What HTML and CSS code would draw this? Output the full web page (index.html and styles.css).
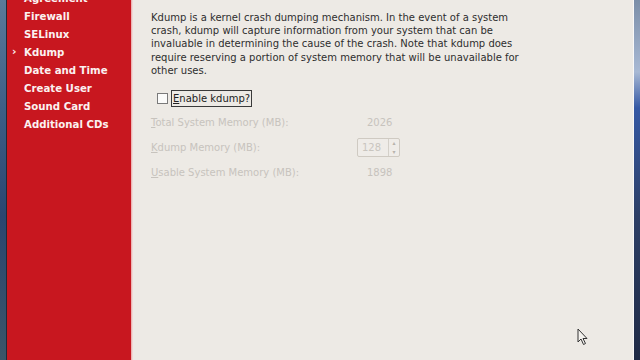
FILE: index.html
```html
<!DOCTYPE html>
<html>
<head>
<meta charset="utf-8">
<link rel="stylesheet" href="styles.css">
</head>
<body>
<div class="screen">
  <div class="edge-left"></div>
  <nav class="sidebar">
    <div class="item cut">Agreement</div>
    <div class="item">Firewall</div>
    <div class="item">SELinux</div>
    <div class="item current"><span class="arrow">›</span>Kdump</div>
    <div class="item">Date and Time</div>
    <div class="item">Create User</div>
    <div class="item">Sound Card</div>
    <div class="item">Additional CDs</div>
  </nav>
  <div class="divider"></div>
  <main class="content">
    <p class="intro">Kdump is a kernel crash dumping mechanism. In the event of a system crash, kdump will capture information from your system that can be invaluable in determining the cause of the crash. Note that kdump does require reserving a portion of system memory that will be unavailable for other uses.</p>
    <div class="check-row">
      <span class="checkbox"></span>
      <span class="check-label"><u>E</u>nable kdump?</span>
    </div>
    <div class="mem-row first">
      <span class="mem-label"><u>T</u>otal System Memory (MB):</span>
      <span class="mem-value">2026</span>
    </div>
    <div class="mem-row spin-row">
      <span class="mem-label"><u>K</u>dump Memory (MB):</span>
      <span class="spinner"><span class="spin-text">128</span><span class="spin-btns"><span class="up">▴</span><span class="down">▾</span></span></span>
    </div>
    <div class="mem-row">
      <span class="mem-label"><u>U</u>sable System Memory (MB):</span>
      <span class="mem-value">1898</span>
    </div>
    <svg class="cursor" width="12" height="18" viewBox="0 0 12 18">
      <path d="M1 1 L1 14 L4 11 L6.5 16.5 L8.5 15.5 L6 10.5 L10 10.5 Z" fill="#f4f2ee" stroke="#333" stroke-width="1"/>
    </svg>
  </main>
  <div class="edge-right"></div>
</div>
</body>
</html>
```
FILE: styles.css
```css
html, body {
  margin: 0;
  padding: 0;
  width: 640px;
  height: 360px;
  overflow: hidden;
}
.screen {
  display: grid;
  grid-template-columns: 7px 124px 2px 1fr 7px;
  width: 640px;
  height: 360px;
  position: relative;
}
.edge-left {
  background: linear-gradient(180deg, #5a7a9a 0%, #3d5f86 30%, #2a4670 60%, #3b5568 100%);
  border-right: 1px solid #1d2b3b;
}
.edge-right {
  background: linear-gradient(180deg, #7b8ea8 0%, #a8b9d4 20%, #3559a5 30%, #2d3f66 60%, #1f2a45 100%);
  border-left: 1px solid #f8f8f8;
}
.sidebar {
  background: #c8171f;
  display: flex;
  flex-direction: column;
  padding-top: 0;
}
.item {
  font-family: "DejaVu Sans", sans-serif;
  font-weight: bold;
  font-size: 10.2px;
  color: #fbf1f1;
  height: 18px;
  line-height: 18px;
  padding-left: 17px;
  position: relative;
  white-space: nowrap;
}
.item.cut {
  margin-top: -10px;
}
.arrow {
  position: absolute;
  left: 5px;
  top: -1px;
  font-size: 11px;
}
.divider {
  background: linear-gradient(90deg, #e9a3a3, #f3e8e6);
}
.content {
  background: #edeae5;
  padding: 11px 0 0 18px;
  position: relative;
  font-family: "DejaVu Sans", sans-serif;
}
.intro {
  margin: 0;
  width: 372px;
  font-size: 10px;
  line-height: 13.2px;
  color: #2e2e2e;
}
.check-row {
  display: flex;
  align-items: center;
  margin-top: 13px;
  margin-left: 6px;
  height: 16px;
}
.checkbox {
  width: 9px;
  height: 9px;
  border: 1px solid #7a7a7a;
  background: #fbfbfa;
}
.check-label {
  margin-left: 3px;
  border: 1px solid #3a3a3a;
  padding: 0 1px;
  height: 15px;
  line-height: 15px;
  font-size: 10px;
  color: #222;
}
.mem-row {
  display: flex;
  align-items: center;
  height: 25px;
  font-size: 10px;
  color: #c7c3bd;
}
.mem-row.first {
  margin-top: 4px;
}
.mem-label {
  width: 216px;
}
.spinner {
  display: flex;
  margin-left: -10px;
  width: 43px;
  height: 19px;
  border: 1px solid #cfcac2;
  border-radius: 2px;
  background: #efece8;
  box-sizing: border-box;
}
.spin-text {
  flex: 1;
  padding-left: 4px;
  line-height: 17px;
  color: #c9c5bf;
}
.spin-btns {
  width: 10px;
  display: flex;
  flex-direction: column;
  border-left: 1px solid #d4d0c9;
  font-size: 6px;
  line-height: 8.5px;
  text-align: center;
  color: #b8b3ac;
}
.cursor {
  position: absolute;
  left: 444px;
  top: 328px;
}
```
